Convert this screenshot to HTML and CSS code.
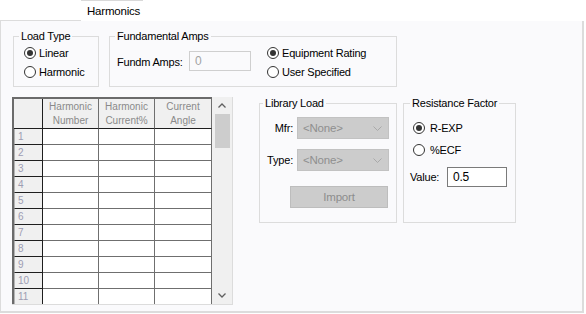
FILE: index.html
```html
<!DOCTYPE html>
<html lang="en">
<head>
    <meta charset="UTF-8">
    <meta name="viewport" content="width=device-width, initial-scale=1.0">
    <title>Harmonics</title>
    <link rel="stylesheet" href="styles.css">
</head>
<body>
    <div class="tabbar">
        <div class="tab-rule"></div>
        <div class="tab">Harmonics</div>
    </div>

    <div class="panel">
        <div class="row-top">
            <fieldset class="group load-type">
                <legend>Load Type</legend>
                <label class="opt"><span class="radio checked"></span>Linear</label>
                <label class="opt"><span class="radio"></span>Harmonic</label>
            </fieldset>

            <fieldset class="group fund-amps">
                <legend>Fundamental Amps</legend>
                <div class="fund-body">
                    <span class="field-label">Fundm Amps:</span>
                    <span class="textbox disabled">0</span>
                    <div class="opts">
                        <label class="opt"><span class="radio checked"></span>Equipment Rating</label>
                        <label class="opt"><span class="radio"></span>User Specified</label>
                    </div>
                </div>
            </fieldset>
        </div>

        <div class="row-bottom">
            <div class="grid">
                <div class="cells">
                    <div class="hcell corner"></div>
                    <div class="hcell">Harmonic<br>Number</div>
                    <div class="hcell">Harmonic<br>Current%</div>
                    <div class="hcell">Current<br>Angle</div>

                    <div class="rhead">1</div><div class="cell"></div><div class="cell"></div><div class="cell"></div>
                    <div class="rhead">2</div><div class="cell"></div><div class="cell"></div><div class="cell"></div>
                    <div class="rhead">3</div><div class="cell"></div><div class="cell"></div><div class="cell"></div>
                    <div class="rhead">4</div><div class="cell"></div><div class="cell"></div><div class="cell"></div>
                    <div class="rhead">5</div><div class="cell"></div><div class="cell"></div><div class="cell"></div>
                    <div class="rhead">6</div><div class="cell"></div><div class="cell"></div><div class="cell"></div>
                    <div class="rhead">7</div><div class="cell"></div><div class="cell"></div><div class="cell"></div>
                    <div class="rhead">8</div><div class="cell"></div><div class="cell"></div><div class="cell"></div>
                    <div class="rhead">9</div><div class="cell"></div><div class="cell"></div><div class="cell"></div>
                    <div class="rhead">10</div><div class="cell"></div><div class="cell"></div><div class="cell"></div>
                    <div class="rhead">11</div><div class="cell"></div><div class="cell"></div><div class="cell"></div>
                </div>
                <div class="vscroll">
                    <div class="arrow">
                        <svg width="8" height="5" viewBox="0 0 8 5"><polyline points="0.5,4.5 4,1 7.5,4.5" fill="none" stroke="#606060" stroke-width="1.3"/></svg>
                    </div>
                    <div class="thumb"></div>
                    <div class="track"></div>
                    <div class="arrow">
                        <svg width="8" height="5" viewBox="0 0 8 5"><polyline points="0.5,0.5 4,4 7.5,0.5" fill="none" stroke="#606060" stroke-width="1.3"/></svg>
                    </div>
                </div>
            </div>

            <fieldset class="group library">
                <legend>Library Load</legend>
                <div class="lib-row first">
                    <span class="lib-label">Mfr:</span>
                    <span class="combo">&lt;None&gt;
                        <svg width="9" height="5" viewBox="0 0 9 5"><polyline points="0.5,0.5 4.5,4.5 8.5,0.5" fill="none" stroke="#a9a9a9" stroke-width="1"/></svg>
                    </span>
                </div>
                <div class="lib-row">
                    <span class="lib-label">Type:</span>
                    <span class="combo">&lt;None&gt;
                        <svg width="9" height="5" viewBox="0 0 9 5"><polyline points="0.5,0.5 4.5,4.5 8.5,0.5" fill="none" stroke="#a9a9a9" stroke-width="1"/></svg>
                    </span>
                </div>
                <button class="import-btn" disabled>Import</button>
            </fieldset>

            <fieldset class="group resistance">
                <legend>Resistance Factor</legend>
                <label class="opt first"><span class="radio checked"></span>R-EXP</label>
                <label class="opt"><span class="radio"></span>%ECF</label>
                <div class="value-row">
                    <span class="value-label">Value:</span>
                    <span class="textbox">0.5</span>
                </div>
            </fieldset>
        </div>
    </div>
</body>
</html>
```

FILE: styles.css
```css
body {
    margin: 0;
    width: 586px;
    height: 314px;
    background-color: #fff;
    font-family: "Liberation Sans", Arial, sans-serif;
    font-size: 11px;
    letter-spacing: -0.2px;
    color: #000;
    overflow: hidden;
}

.tabbar {
    display: flex;
    height: 21px;
}

.tab-rule {
    width: 81px;
    box-sizing: border-box;
    border-bottom: 1px solid #dcdcdc;
}

.tab {
    width: 62px;
    box-sizing: border-box;
    border-top: 1px solid #d9d9d9;
    padding-left: 6px;
    line-height: 20px;
    font-size: 11.5px;
}

.panel {
    width: 584px;
    height: 292px;
    box-sizing: border-box;
    background-color: #fafafc;
    border-left: 1px solid #dcdcdc;
    border-right: 2px solid #dcdcdc;
    border-bottom: 2px solid #dcdcdc;
    padding-top: 9px;
}

/* group boxes */
.group {
    margin: 0;
    border: 1px solid #dcdcdc;
    padding: 0 0 0 5px;
    box-sizing: border-box;
}

.group legend {
    padding: 0 2px;
    line-height: 13px;
}

.opt {
    display: flex;
    align-items: center;
    gap: 3px;
    height: 19px;
}

.radio {
    width: 12px;
    height: 12px;
    box-sizing: border-box;
    border: 1px solid #333;
    border-radius: 50%;
    background-color: #fff;
    display: inline-flex;
    align-items: center;
    justify-content: center;
}

.radio.checked::after {
    content: "";
    width: 6px;
    height: 6px;
    border-radius: 50%;
    background-color: #333;
}

.textbox {
    display: inline-block;
    box-sizing: border-box;
    height: 20px;
    line-height: 18px;
    padding-left: 5px;
    border: 1px solid #7a7a7a;
    background-color: #fff;
    font-size: 12px;
}

.textbox.disabled {
    border-color: #cfcfcf;
    background-color: #fafafc;
    color: #a3a3a3;
}

/* top row */
.row-top {
    display: flex;
    gap: 10px;
    margin-left: 12px;
}

.load-type {
    width: 86px;
    height: 57px;
}

.load-type .opt {
    margin-left: 5px;
}

.fund-amps {
    width: 288px;
    height: 57px;
}

.fund-body {
    display: flex;
    align-items: center;
    height: 38px;
}

.field-label {
    width: 72px;
    padding-left: 2px;
}

.fund-body .textbox {
    width: 62px;
    margin-top: -2px;
}

.opts {
    margin-left: 16px;
}

/* bottom row */
.row-bottom {
    display: flex;
    align-items: flex-start;
    margin-top: 10px;
    margin-left: 11px;
}

.grid {
    display: flex;
    width: 221px;
    height: 208px;
    box-sizing: border-box;
    border-right: 1px solid #dcdcdc;
    border-bottom: 1px solid #dcdcdc;
    overflow: hidden;
}

.cells {
    display: grid;
    grid-template-columns: 29px 56px 56px 57px;
    grid-template-rows: 30px repeat(11, 16px);
    border-left: 2px solid #6b6b6b;
    border-top: 2px solid #6b6b6b;
    font-size: 10px;
    letter-spacing: 0;
    overflow: hidden;
    height: 205px;
}

.cells > div {
    box-sizing: border-box;
}

.hcell {
    background-color: #f0f0f0;
    color: #8a8a8a;
    text-align: center;
    line-height: 14px;
    padding-top: 1px;
    border-right: 1px solid #6f6f6f;
    border-bottom: 1px solid #1e1e1e;
}

.hcell.corner {
    border-right-color: #1e1e1e;
}

.rhead {
    background-color: #f0f0f0;
    color: #9d9db3;
    padding-left: 3px;
    line-height: 15px;
    border-left: 1px solid #b4b4b4;
    border-right: 1px solid #1e1e1e;
    border-bottom: 1px solid #1e1e1e;
}

.cell {
    background-color: #fff;
    border-right: 1px solid #6f6f6f;
    border-bottom: 1px solid #6f6f6f;
}

.vscroll {
    width: 20px;
    display: flex;
    flex-direction: column;
    align-items: center;
    background-color: #f0f0f0;
}

.arrow {
    height: 17px;
    display: flex;
    align-items: center;
    justify-content: center;
}

.thumb {
    width: 15px;
    height: 34px;
    background-color: #cdcdcd;
}

.track {
    flex: 1;
}

.library {
    width: 138px;
    height: 126px;
    margin-left: 26px;
    padding-left: 4px;
}

.library legend {
    margin-left: -1px;
}

.lib-row {
    display: flex;
    align-items: center;
    margin-top: 10px;
}

.lib-row.first {
    margin-top: 7px;
}

.lib-label {
    width: 29px;
    text-align: right;
    margin-right: 4px;
}

.combo {
    display: flex;
    align-items: center;
    justify-content: space-between;
    width: 92px;
    height: 22px;
    box-sizing: border-box;
    padding: 0 6px 0 5px;
    background-color: #cccccc;
    border: 1px solid #c2c2c2;
    color: #8f8f8f;
    font-size: 11.5px;
}

.import-btn {
    display: block;
    width: 98px;
    height: 22px;
    margin: 15px 0 0 26px;
    padding: 0;
    background-color: #cccccc;
    border: 1px solid #bdbdbd;
    border-radius: 0;
    color: #8c8c8c;
    font-family: inherit;
    font-size: 11.5px;
    letter-spacing: -0.2px;
}

.resistance {
    width: 113px;
    height: 126px;
    margin-left: 6px;
    padding-left: 6px;
}

.resistance .opt {
    margin-left: 3px;
    gap: 5px;
}

.resistance .opt.first {
    margin-top: 8px;
    margin-bottom: 3px;
}

.value-row {
    display: flex;
    align-items: center;
    margin-top: 8px;
}

.value-label {
    width: 37px;
}

.value-row .textbox {
    width: 60px;
}
```
